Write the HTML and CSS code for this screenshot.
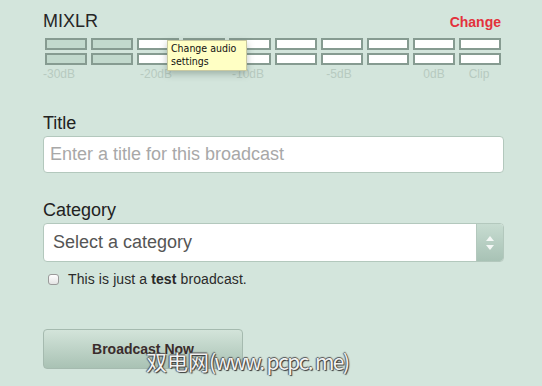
FILE: index.html
```html
<!DOCTYPE html>
<html>
<head>
<meta charset="utf-8">
<link rel="stylesheet" href="styles.css">
</head>
<body>
<div class="panel">
  <div class="header">
    <span class="brand">MIXLR</span>
    <a class="change">Change</a>
  </div>
  <div class="meter">
    <div class="row">
      <span class="cell on"></span><span class="cell on"></span><span class="cell"></span><span class="cell"></span><span class="cell"></span><span class="cell"></span><span class="cell"></span><span class="cell"></span><span class="cell"></span><span class="cell"></span>
    </div>
    <div class="row">
      <span class="cell on"></span><span class="cell on"></span><span class="cell"></span><span class="cell"></span><span class="cell"></span><span class="cell"></span><span class="cell"></span><span class="cell"></span><span class="cell"></span><span class="cell"></span>
    </div>
    <div class="labels">
      <span class="lbl c1">-30dB</span>
      <span class="lbl c3">-20dB</span>
      <span class="lbl c5">-10dB</span>
      <span class="lbl c7">-5dB</span>
      <span class="lbl c9">0dB</span>
      <span class="lbl c10">Clip</span>
    </div>
    <div class="tooltip">Change audio<br>settings</div>
  </div>

  <div class="field first">
    <label class="label">Title</label>
    <div class="input"><span class="placeholder">Enter a title for this broadcast</span></div>
  </div>

  <div class="field">
    <label class="label">Category</label>
    <div class="select">
      <span class="select-text">Select a category</span>
      <span class="select-arrows">
        <svg width="10" height="18" viewBox="0 0 10 18"><path d="M5 2 L9 7 L1 7 Z" fill="#f4f8f6"/><path d="M1 11 L9 11 L5 16 Z" fill="#f4f8f6"/></svg>
      </span>
    </div>
  </div>

  <div class="check-row">
    <span class="checkbox"></span>
    <span class="check-text">This is just a <b>test</b> broadcast.</span>
  </div>

  <div class="button">Broadcast Now</div>
</div>
<div class="watermark">双电网<span class="wm-latin">(www. pcpc. me)</span></div>
</body>
</html>
```

FILE: styles.css
```css
html, body {
  margin: 0;
  padding: 0;
}
body {
  background: #d3e5dc;
  font-family: "Liberation Sans", Arial, sans-serif;
  width: 542px;
  height: 386px;
  overflow: hidden;
  position: relative;
}
.panel {
  padding: 11px 38px 0 43px;
}
.header {
  display: flex;
  justify-content: space-between;
  align-items: baseline;
  line-height: 20px;
  height: 20px;
}
.brand {
  font-size: 18px;
  color: #262626;
}
.change {
  font-size: 14px;
  font-weight: bold;
  color: #e3323c;
  margin-right: 3px;
}
.meter {
  position: relative;
  margin-top: 7px;
  padding-left: 2px;
  width: 456px;
}
.row {
  display: grid;
  grid-template-columns: repeat(10, 42px);
  column-gap: 4px;
  margin-bottom: 3px;
}
.cell {
  height: 12px;
  box-sizing: border-box;
  border: 2px solid #869b91;
  background: #ffffff;
}
.cell.on {
  background: #c2d9cd;
}
.labels {
  display: grid;
  grid-template-columns: repeat(10, 42px);
  column-gap: 4px;
  margin-top: -1px;
  font-size: 12px;
  line-height: 14px;
  color: #b7cac0;
}
.lbl {
  justify-self: center;
  white-space: nowrap;
}
.c1 { grid-column: 1; justify-self: start; margin-left: -2px; }
.c3 { grid-column: 3; margin-left: -4px; }
.c5 { grid-column: 5; margin-left: -4px; }
.c7 { grid-column: 7; margin-left: -6px; }
.c9 { grid-column: 9; }
.c10 { grid-column: 10; margin-left: -2px; }
.tooltip {
  position: absolute;
  left: 124px;
  top: 2px;
  width: 73px;
  padding: 1px 2px 2px 3px;
  background: #ffffc4;
  border: 1px solid #c9c9a0;
  font-family: "DejaVu Sans Condensed", "DejaVu Sans", sans-serif;
  font-size: 10.5px;
  line-height: 13px;
  color: #111;
  box-shadow: 0 3px 7px rgba(60, 80, 70, 0.35);
}
.field.first {
  margin-top: 32px;
}
.field {
  margin-top: 27px;
}
.label {
  display: block;
  font-size: 18px;
  line-height: 20px;
  color: #222;
  margin-bottom: 3px;
}
.input {
  box-sizing: border-box;
  width: 461px;
  height: 37px;
  background: #fff;
  border: 1px solid #b3c8bd;
  border-radius: 4px;
  display: flex;
  align-items: center;
  padding-left: 6px;
  font-size: 18px;
}
.placeholder {
  color: #a8a8a8;
}
.select {
  box-sizing: border-box;
  width: 461px;
  height: 39px;
  background: #fff;
  border: 1px solid #b3c8bd;
  border-radius: 4px;
  display: flex;
  align-items: stretch;
  font-size: 18px;
  overflow: hidden;
}
.select-text {
  flex: 1;
  display: flex;
  align-items: center;
  padding-left: 9px;
  color: #555;
}
.select-arrows {
  width: 26px;
  display: flex;
  align-items: center;
  justify-content: center;
  background: linear-gradient(#c7dcd1, #a8c2b5);
  border-left: 1px solid #b3c8bd;
}
.check-row {
  display: flex;
  align-items: center;
  margin-top: 9px;
  height: 16px;
  font-size: 14px;
  line-height: 16px;
  color: #2a2a2a;
}
.check-text {
  letter-spacing: 0.1px;
}
.checkbox {
  box-sizing: border-box;
  width: 11px;
  height: 11px;
  margin-left: 5px;
  margin-right: 9px;
  border: 1px solid #9a9a9a;
  border-radius: 3px;
  background: linear-gradient(#ffffff, #e4e4e4);
}
.button {
  box-sizing: border-box;
  margin-top: 42px;
  width: 200px;
  height: 40px;
  border: 1px solid #a5baaf;
  border-radius: 4px;
  background: linear-gradient(#d3e4da, #a9c2b4);
  display: flex;
  align-items: center;
  justify-content: center;
  font-size: 14px;
  font-weight: bold;
  color: #3a2c2c;
}
.watermark {
  position: absolute;
  left: 146px;
  top: 349px;
  font-family: "Noto Sans CJK SC", sans-serif;
  font-size: 21px;
  line-height: 24px;
  color: #f2f2f2;
  white-space: nowrap;
  text-shadow: 1px 1px 1px #333, -1px 0 1px #555, 0 -1px 1px #555;
}
.wm-latin {
  letter-spacing: -1.6px;
}
```
